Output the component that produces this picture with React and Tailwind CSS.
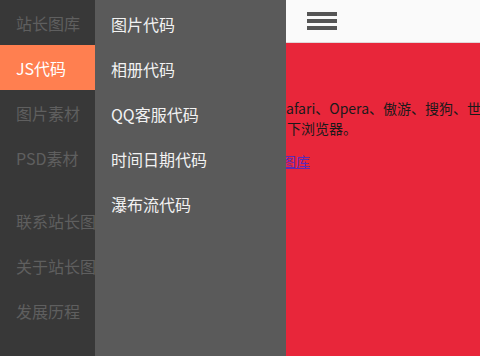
import React from 'react';

const mainNav = [
    { name: '站长图库' },
    { name: 'JS代码', active: true },
    { name: '图片素材' },
    { name: 'PSD素材' },
    { name: '联系站长图库', gap: true },
    { name: '关于站长图库' },
    { name: '发展历程' },
];

const subNav = ['图片代码', '相册代码', 'QQ客服代码', '时间日期代码', '瀑布流代码'];

export default function App() {
    return (
        <div className="relative flex w-[480px] h-[356px] overflow-hidden bg-[#383838] font-['Noto_Sans_CJK_SC','Noto_Sans',sans-serif]">
            <nav className="w-[95px] shrink-0 flex flex-col whitespace-nowrap">
                {mainNav.map(item => (
                    <a
                        key={item.name}
                        href="#"
                        className={`h-[45px] pl-4 pt-[1px] flex items-center text-[16px] ${item.gap ? 'mt-[18px]' : ''} ${item.active ? 'bg-[#ff7f50] text-white' : 'text-[#5f5f5f]'}`}
                    >
                        {item.name}
                    </a>
                ))}
            </nav>

            <main className="flex-1 min-w-0 flex flex-col bg-[#e8263a] overflow-hidden">
                <header className="h-[43px] shrink-0 bg-[#fafafa] border-b border-[#e2d6d8] flex items-center pl-[212px]">
                    <button className="flex flex-col gap-[3px] w-[30px] mt-[-1px]">
                        <span className="block h-[4px] bg-[#555]" />
                        <span className="block h-[4px] bg-[#555]" />
                        <span className="block h-[4px] bg-[#555]" />
                    </button>
                </header>
                <div className="pt-[55px] pl-[191px] text-[14px] leading-[20px] text-[#1a1a1a] whitespace-nowrap overflow-hidden">
                    <p>afari、Opera、傲游、搜狗、世</p>
                    <p className="pl-[1px]">下浏览器。</p>
                    <p className="mt-[13px] -ml-[4px]">
                        <a href="#" className="text-[#5a2ab8] underline">图库</a>
                    </p>
                </div>
            </main>

            <div className="absolute left-[95px] top-0 w-[191px] h-full bg-[#5a5a5a] flex flex-col">
                {subNav.map(name => (
                    <a key={name} href="#" className="h-[45px] pl-4 pt-[3px] flex items-center text-[16px] text-[#f2f2f2] whitespace-nowrap">
                        {name}
                    </a>
                ))}
            </div>
        </div>
    );
}
